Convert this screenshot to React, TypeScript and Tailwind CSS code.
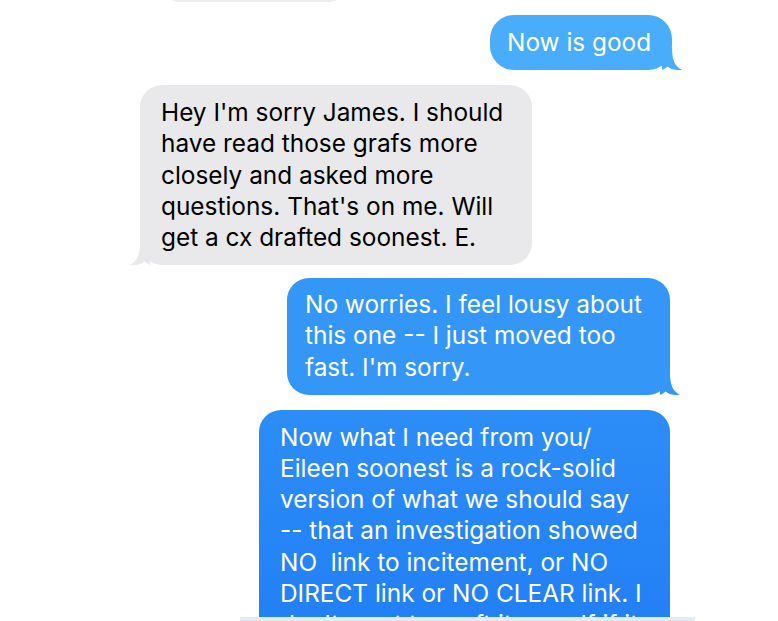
import React from "react";

const Tail = ({ fill, side }: { fill: string; side: "left" | "right" }) => (
  <svg
    width="20"
    height="22"
    viewBox="0 0 20 22"
    className={
      side === "right"
        ? "absolute bottom-0 right-[-10px]"
        : "absolute bottom-0 left-[-10px] -scale-x-100"
    }
  >
    <path d="M0 0 H10 C10 10 12 18 20 22 C14 22.5 9 21.5 5.5 18.5 C4 20 2 21.3 0 22 Z" fill={fill} />
  </svg>
);

const Lines = ({ lines }: { lines: string[] }) => (
  <>
    {lines.map((l, i) => (
      <span key={i} className="block whitespace-pre">
        {l}
      </span>
    ))}
  </>
);

const App = () => {
  return (
    <div
      className="w-[778px] h-[621px] overflow-hidden bg-white flex flex-col"
      style={{ fontFamily: "Inter, 'Liberation Sans', sans-serif" }}
    >
      <div className="h-[617px] overflow-hidden flex flex-col text-[24.4px] leading-[31.2px]">
        {/* tail end of an earlier grey bubble */}
        <div className="relative ml-[160px] w-[188px] h-[40px] mt-[-38px] rounded-[20px] bg-[#eeeeef] shrink-0" />

        {/* Now is good */}
        <div className="relative self-end mr-[106px] mt-[13px] w-[182px] rounded-[24px] bg-[#49adfb] pl-[17px] pt-[12px] pb-[12px] text-white shrink-0">
          Now is good
          <Tail fill="#49adfb" side="right" />
        </div>

        {/* grey incoming */}
        <div className="relative ml-[140px] mt-[15px] w-[392px] rounded-[22px] bg-[#e9e9eb] pl-[21px] pt-[12px] pb-[12px] text-black shrink-0">
          <Lines
            lines={[
              "Hey I'm sorry James. I should",
              "have read those grafs more",
              "closely and asked more",
              "questions. That's on me. Will",
              "get a cx drafted soonest. E.",
            ]}
          />
          <Tail fill="#e9e9eb" side="left" />
        </div>

        {/* No worries */}
        <div className="relative self-end mr-[108px] mt-[13px] w-[383px] rounded-[22px] bg-[#3497f8] pl-[18px] pt-[11px] pb-[12px] text-white shrink-0">
          <Lines
            lines={[
              "No worries. I feel lousy about",
              "this one -- I just moved too",
              "fast. I'm sorry.",
            ]}
          />
          <Tail fill="#3497f8" side="right" />
        </div>

        {/* Now what I need */}
        <div className="relative self-end mr-[108px] mt-[15px] w-[411px] rounded-t-[22px] bg-gradient-to-b from-[#2d8df7] to-[#1f7cf5] pl-[21px] pt-[12px] pb-[12px] text-white shrink-0">
          <Lines
            lines={[
              "Now what I need from you/",
              "Eileen soonest is a rock-solid",
              "version of what we should say",
              "-- that an investigation showed",
              "NO  link to incitement, or NO",
              "DIRECT link or NO CLEAR link. I",
              "don't want to craft it myself if it",
              "comes across as defensive.",
            ]}
          />
        </div>
      </div>
      <div className="ml-[240px] w-[455px] h-[4px] bg-[#e3ebf5] shrink-0" />
    </div>
  );
};

export default App;
